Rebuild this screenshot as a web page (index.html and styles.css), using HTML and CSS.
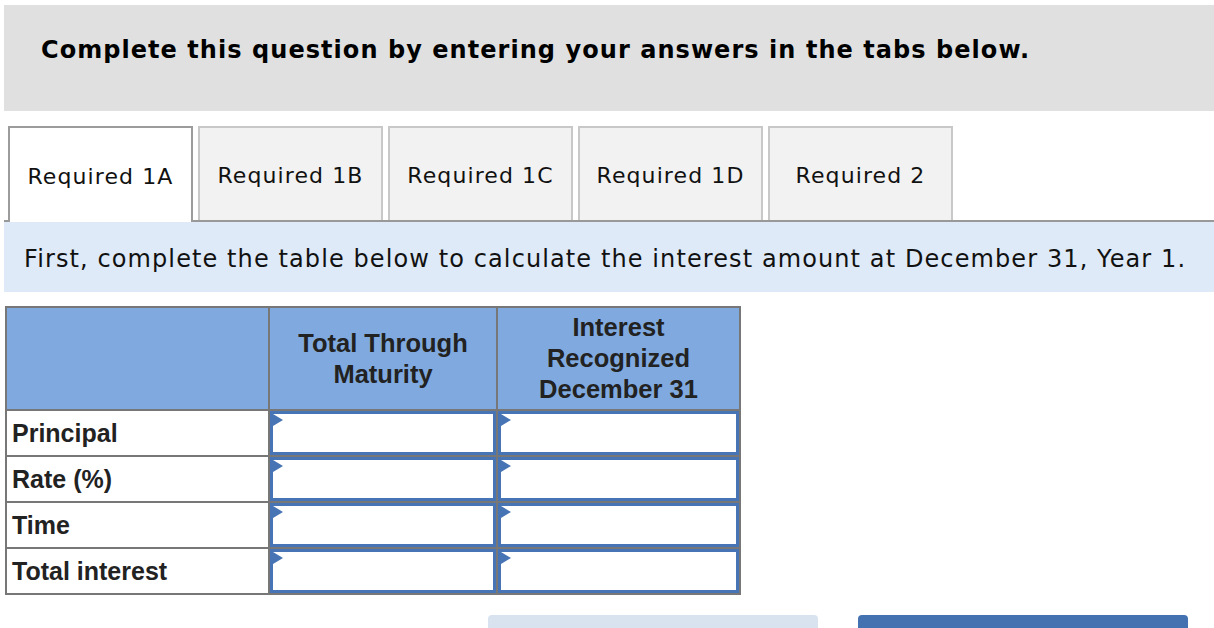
FILE: index.html
```html
<!DOCTYPE html>
<html>
<head>
<meta charset="utf-8">
<link rel="stylesheet" href="styles.css">
</head>
<body>
<div class="page">
  <div class="banner">Complete this question by entering your answers in the tabs below.</div>
  <div class="tabs">
    <div class="tab active">Required 1A</div>
    <div class="tab">Required 1B</div>
    <div class="tab">Required 1C</div>
    <div class="tab">Required 1D</div>
    <div class="tab">Required 2</div>
  </div>
  <div class="instruction">First, complete the table below to calculate the interest amount at December 31, Year 1.</div>
  <table class="grid">
    <thead>
      <tr>
        <th class="c1"></th>
        <th class="c2">Total Through<br>Maturity</th>
        <th class="c3">Interest<br>Recognized<br>December 31</th>
      </tr>
    </thead>
    <tbody>
      <tr><td class="label">Principal</td><td class="in"><div class="box"></div></td><td class="in"><div class="box"></div></td></tr>
      <tr><td class="label">Rate (%)</td><td class="in"><div class="box"></div></td><td class="in"><div class="box"></div></td></tr>
      <tr><td class="label">Time</td><td class="in"><div class="box"></div></td><td class="in"><div class="box"></div></td></tr>
      <tr><td class="label">Total interest</td><td class="in"><div class="box"></div></td><td class="in"><div class="box"></div></td></tr>
    </tbody>
  </table>
  <div class="buttons">
    <div class="btn prev"></div>
    <div class="btn next"></div>
  </div>
</div>
</body>
</html>
```
FILE: styles.css
```css
html, body {
  margin: 0;
  padding: 0;
  background: #ffffff;
  overflow: hidden;
}
.page {
  padding: 5px 0 0 4px;
  font-family: "DejaVu Sans", Verdana, sans-serif;
  color: #000;
}
.banner {
  height: 106px;
  box-sizing: border-box;
  background: #e0e0e0;
  padding: 30px 0 0 37px;
  font-weight: bold;
  font-size: 24px;
  letter-spacing: 1.05px;
  line-height: 30px;
}
.tabs {
  margin-top: 15px;
  display: flex;
  gap: 5px;
  padding-left: 4px;
  border-bottom: 2px solid #999999;
  height: 94px;
}
.tab {
  width: 185px;
  height: 94px;
  box-sizing: border-box;
  border: 2px solid #c8c8c8;
  border-bottom: none;
  background: #f2f2f2;
  display: flex;
  align-items: center;
  justify-content: center;
  padding-top: 2px;
  font-size: 22px;
  letter-spacing: 1.1px;
  color: #111;
}
.tab.active {
  height: 96px;
  margin-bottom: -2px;
  background: #ffffff;
  border-color: #9c9c9c;
}
.instruction {
  height: 70px;
  box-sizing: border-box;
  background: #deeaf7;
  padding: 22px 0 0 20px;
  font-size: 24px;
  letter-spacing: 1.1px;
  line-height: 30px;
  color: #111;
  white-space: nowrap;
}
.grid {
  margin: 14px 0 0 1px;
  border-collapse: collapse;
  font-family: "Liberation Sans", Arial, sans-serif;
  color: #222;
}
.grid th, .grid td {
  border: 2px solid #777777;
  padding: 0;
}
.grid th {
  background: #80aadf;
  height: 101px;
  font-size: 25.5px;
  line-height: 31px;
  font-weight: bold;
  text-align: center;
}
.c1 { width: 261px; }
.c2 { width: 226px; }
.c3 { width: 241px; }
.grid td {
  height: 44px;
}
.label {
  font-size: 25px;
  font-weight: bold;
  padding: 0 0 0 5px !important;
  line-height: 30px;
  vertical-align: middle;
  text-align: left;
}
.in {
  vertical-align: top;
}
.box {
  position: relative;
  height: 44px;
  box-sizing: border-box;
  border: 3px solid #4674b4;
  background: #fff;
}
.box::before {
  content: "";
  position: absolute;
  left: 0;
  top: 0;
  border-left: 10px solid #4674b4;
  border-top: 6px solid transparent;
  border-bottom: 6px solid transparent;
}
.buttons {
  display: flex;
  gap: 40px;
  padding-left: 484px;
  margin-top: 20px;
}
.btn {
  width: 330px;
  height: 13px;
  border-radius: 4px 4px 0 0;
}
.prev { background: #d9e3ef; }
.next { background: #4472b0; }
```
